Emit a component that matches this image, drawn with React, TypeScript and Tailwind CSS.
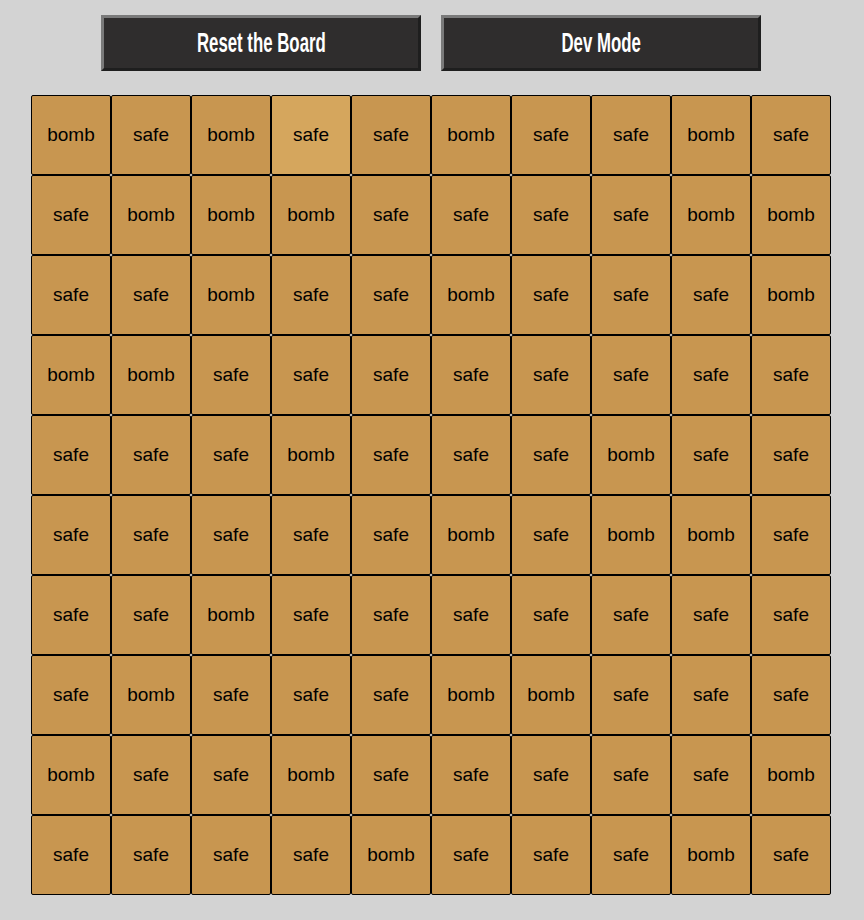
const rows = [
  "bomb safe bomb safe safe bomb safe safe bomb safe",
  "safe bomb bomb bomb safe safe safe safe bomb bomb",
  "safe safe bomb safe safe bomb safe safe safe bomb",
  "bomb bomb safe safe safe safe safe safe safe safe",
  "safe safe safe bomb safe safe safe bomb safe safe",
  "safe safe safe safe safe bomb safe bomb bomb safe",
  "safe safe bomb safe safe safe safe safe safe safe",
  "safe bomb safe safe safe bomb bomb safe safe safe",
  "bomb safe safe bomb safe safe safe safe safe bomb",
  "safe safe safe safe bomb safe safe safe bomb safe",
].map((r) => r.split(" "));

function BoardButton({ label }: { label: string }) {
  return (
    <button className="w-[320px] h-[56px] flex items-center justify-center bg-[#2f2d2d] text-white border-[3px] border-t-[#7a7a7a] border-l-[#7a7a7a] border-b-[#1e1e1e] border-r-[#1e1e1e]">
      <span className="inline-block scale-x-[0.6] text-[28px] leading-none font-bold font-['Liberation_Sans',Arial,sans-serif] whitespace-nowrap">
        {label}
      </span>
    </button>
  );
}

export default function App() {
  return (
    <div className="min-h-[920px] bg-[#d3d3d3] flex flex-col items-center pt-[15px] font-['Liberation_Sans',Arial,sans-serif]">
      <div className="flex gap-5 pr-[2px]">
        <BoardButton label="Reset the Board" />
        <BoardButton label="Dev Mode" />
      </div>
      <div className="mt-6 pr-[2px]">
        <div className="grid grid-cols-10 w-[800px]">
          {rows.map((row, ri) =>
            row.map((cell, ci) => (
              <div
                key={`${ri}-${ci}`}
                className={`h-[80px] flex items-center justify-center border border-black rounded-[2px] text-[19px] text-black ${
                  ri === 0 && ci === 3 ? "bg-[#d5a65d]" : "bg-[#c89650]"
                }`}
              >
                {cell}
              </div>
            ))
          )}
        </div>
      </div>
    </div>
  );
}
